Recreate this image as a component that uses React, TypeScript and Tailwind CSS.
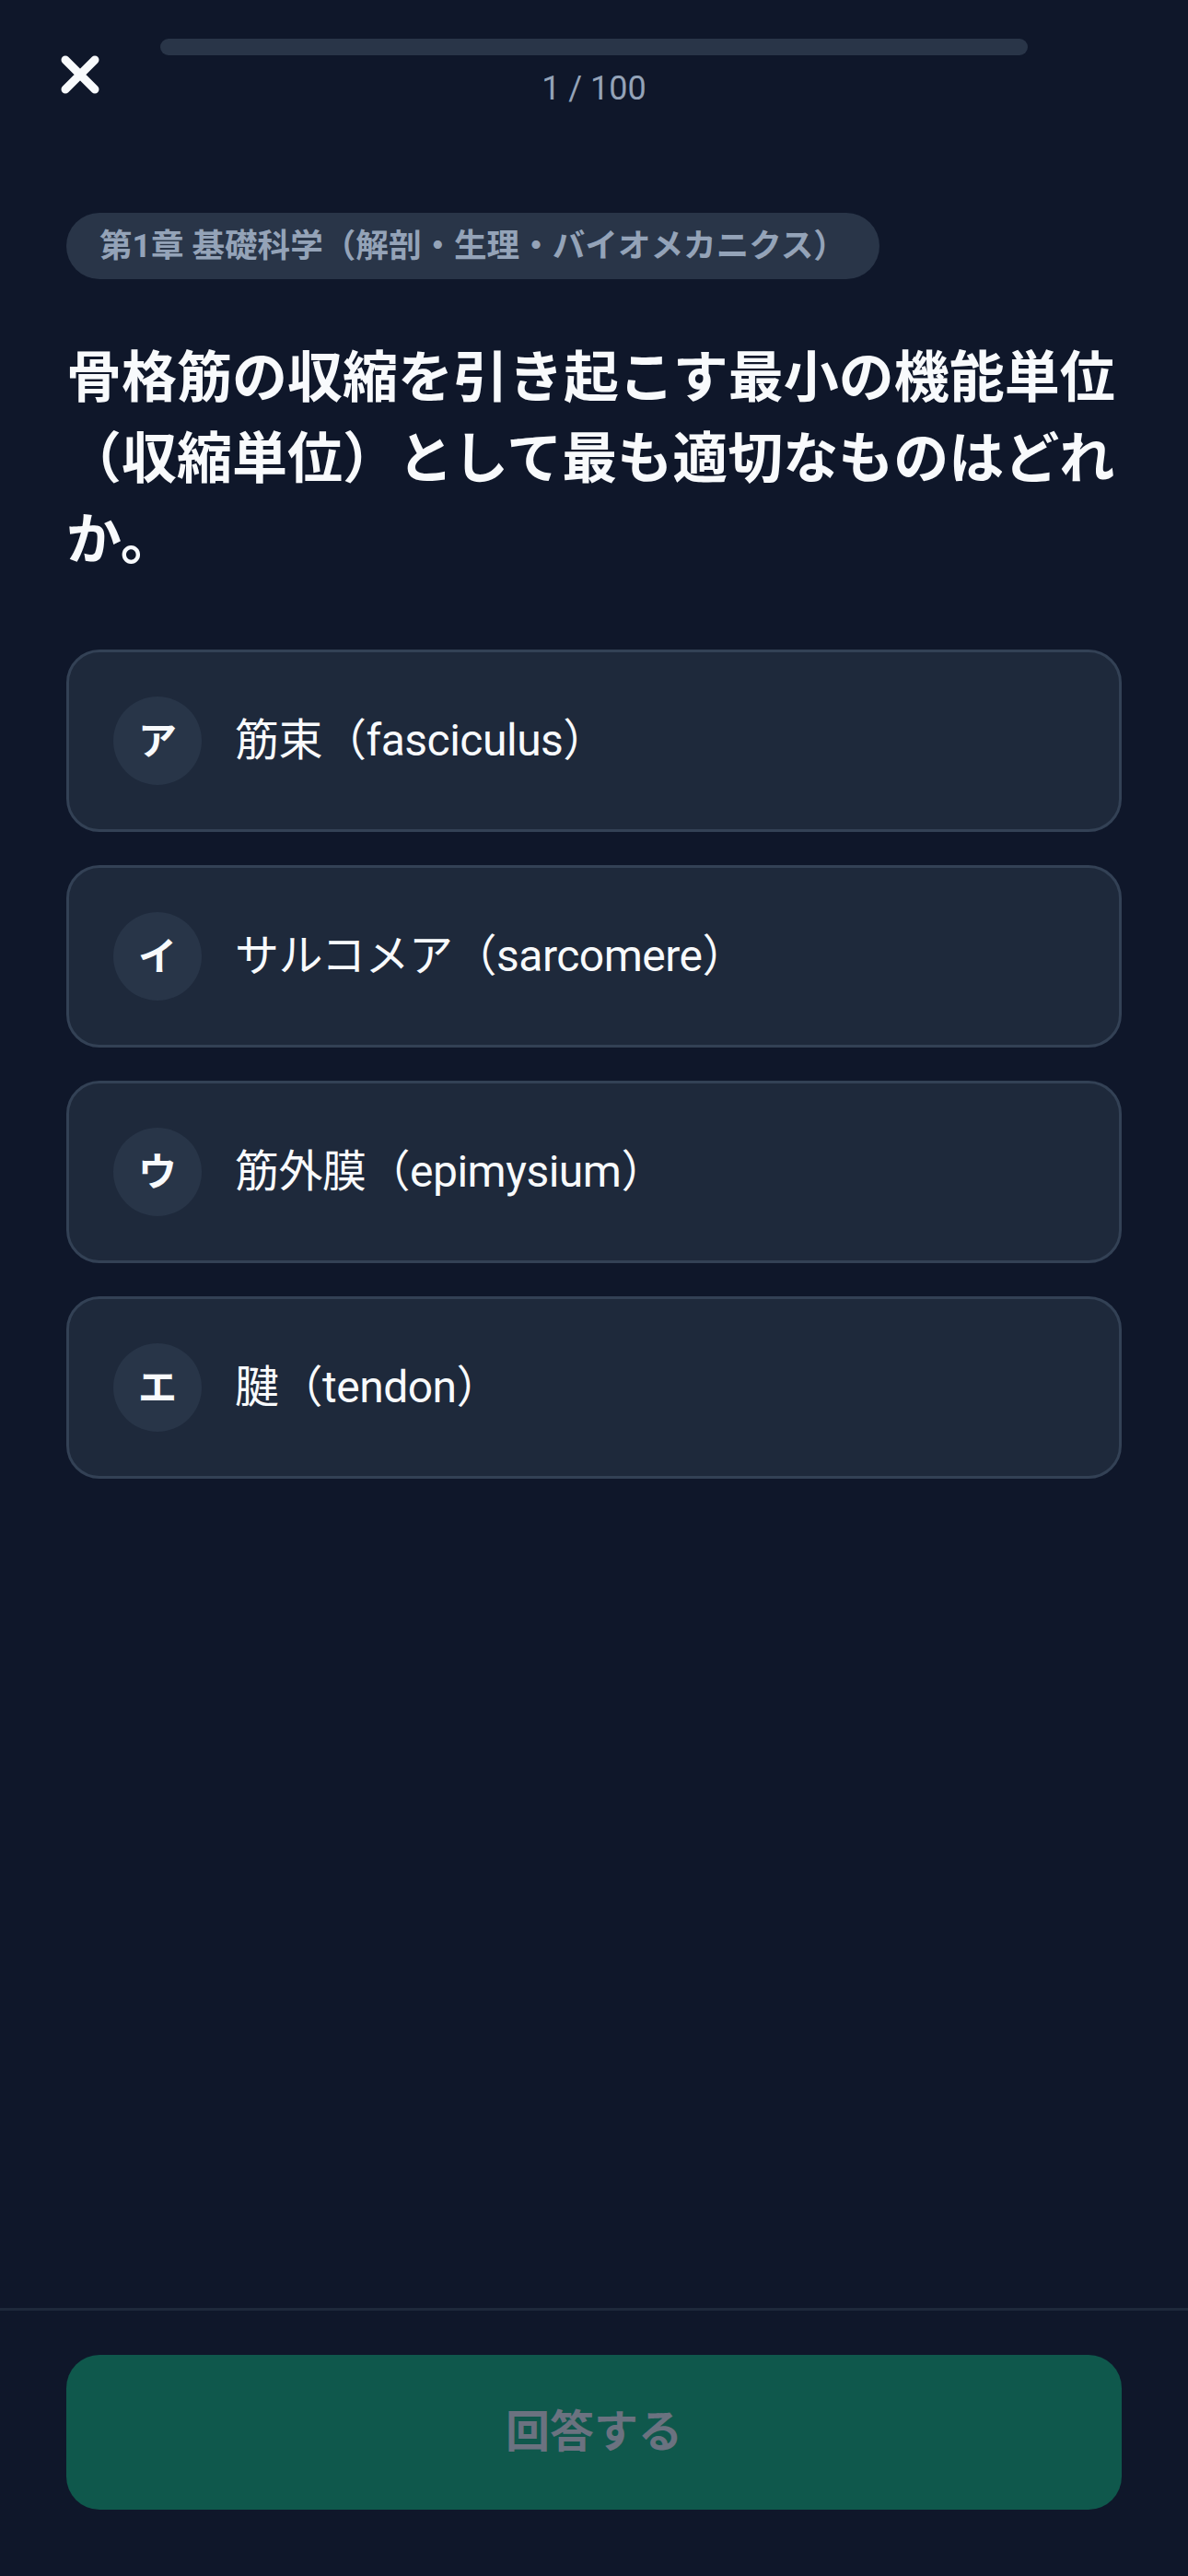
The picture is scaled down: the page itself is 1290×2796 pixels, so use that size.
import React from "react";

const options = [
  { key: "ア", text: "筋束（fasciculus）" },
  { key: "イ", text: "サルコメア（sarcomere）" },
  { key: "ウ", text: "筋外膜（epimysium）" },
  { key: "エ", text: "腱（tendon）" },
];

export default function App() {
  return (
    <div
      className="min-h-[2796px] w-full bg-[#0f172a] flex flex-col text-white"
      style={{ fontFamily: '"Roboto", "Noto Sans CJK JP", sans-serif' }}
    >
      {/* Header */}
      <div className="flex items-center pt-[42px]">
        <div className="w-[174px] flex items-center pl-[66px]">
          <svg width="42" height="42" viewBox="0 0 42 42" fill="none">
            <path
              d="M5 5 L37 37 M37 5 L5 37"
              stroke="#f8fafc"
              strokeWidth="9"
              strokeLinecap="round"
            />
          </svg>
        </div>
        <div className="flex-1 flex flex-col items-center">
          <div className="h-[18px] w-full rounded-full bg-[#293548]" />
          <div className="mt-[12px] text-[36px] leading-[48px] text-[#94a3b8]">1 / 100</div>
        </div>
        <div className="w-[174px]" />
      </div>

      {/* Main */}
      <div className="flex-1 px-[72px] pt-[111px]">
        <div className="inline-flex rounded-full bg-[#293548] px-[36px] py-[12px] text-[35.6px] leading-[48px] font-bold text-[#94a3b8]">
          第1章 基礎科学（解剖・生理・バイオメカニクス）
        </div>
        <h1 className="mt-[64px] text-[60px] leading-[88px] font-bold text-[#f8fafc]">
          骨格筋の収縮を引き起こす最小の機能単位（収縮単位）として最も適切なものはどれか。
        </h1>
        <div className="mt-[74px] flex flex-col gap-[36px]">
          {options.map((o) => (
            <div
              key={o.key}
              className="flex items-center gap-[36px] rounded-[36px] border-[3px] border-[#334155] bg-[#1e293b] p-[48px]"
            >
              <div className="flex h-[96px] w-[96px] shrink-0 items-center justify-center rounded-full bg-[#283548] text-[42px] font-bold text-[#f8fafc]">
                {o.key}
              </div>
              <div className="text-[48px] leading-[64px] tracking-[-0.5px] text-[#f8fafc]">{o.text}</div>
            </div>
          ))}
        </div>
      </div>

      {/* Footer */}
      <div className="border-t-[3px] border-[#1e293b] px-[72px] pt-[48px] pb-[72px]">
        <div className="flex h-[168px] w-full items-center justify-center rounded-[36px] bg-[#0f584c] text-[48px] font-bold text-[#6b7280]">
          回答する
        </div>
      </div>
    </div>
  );
}
